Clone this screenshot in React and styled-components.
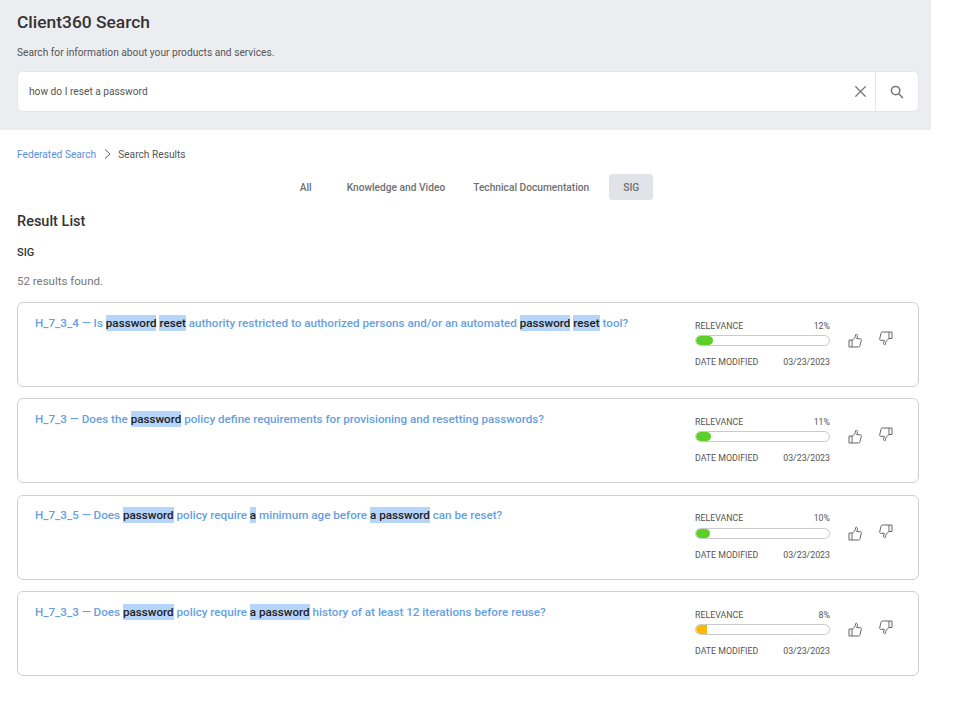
import React from 'react';
import styled, { createGlobalStyle } from 'styled-components';
import { X } from 'lucide-react';

const GlobalStyle = createGlobalStyle`
  body {
    margin: 0;
    background: #fff;
    font-family: Roboto, "Liberation Sans", sans-serif;
    color: #333;
  }
`;

const Page = styled.div`
  width: 931px;
  height: 720px;
  overflow: hidden;
`;

const Header = styled.header`
  height: 130px;
  box-sizing: border-box;
  background: #ecedf1;
  padding: 12px 12px 0 17px;
`;

const Title = styled.h1`
  margin: 0;
  font-size: 17.4px;
  line-height: 21px;
  font-weight: 500;
  color: #333;
`;

const Subtitle = styled.p`
  margin: 14px 0 0;
  font-size: 10.2px;
  line-height: 12px;
  color: #555;
`;

const SearchBox = styled.div`
  margin-top: 12px;
  height: 41px;
  box-sizing: border-box;
  display: flex;
  align-items: center;
  background: #fff;
  border: 1px solid #e6e7eb;
  border-radius: 6px;
`;

const Query = styled.div`
  flex: 1;
  padding-left: 11px;
  font-size: 10.2px;
  color: #555;
`;

const ClearButton = styled.div`
  width: 29px;
  height: 100%;
  display: flex;
  align-items: center;
  justify-content: center;
  color: #777;
`;

const SearchButton = styled(ClearButton)`
  width: 42px;
  border-left: 1px solid #e6e7eb;
`;

const Content = styled.main`
  padding: 0 12px 0 17px;
`;

const Breadcrumb = styled.nav`
  display: flex;
  align-items: center;
  height: 14px;
  margin-top: 17px;
  font-size: 10.2px;
  color: #555;
`;

const CrumbLink = styled.span`
  color: #5b8fdc;
`;

const CrumbArrow = styled.svg`
  margin: 0 7.5px;
`;

const Tabs = styled.div`
  display: flex;
  justify-content: center;
  height: 26px;
  margin: 13px 0 0;
  padding-left: 3px;
`;

const Tab = styled.div`
  display: flex;
  align-items: center;
  padding: 0 14px;
  margin-left: ${(p) => (p.$active ? '6px' : '0')};
  margin-right: ${(p) => (p.$first ? '7px' : '0')};
  font-size: 10.2px;
  font-weight: 500;
  color: #707070;
  border-radius: 3px;
  background: ${(p) => (p.$active ? '#e2e3e9' : 'transparent')};
`;

const ListTitle = styled.h2`
  margin: 12px 0 0;
  font-size: 14.5px;
  line-height: 20px;
  font-weight: 500;
  color: #333;
`;

const Category = styled.div`
  margin-top: 14px;
  font-size: 11px;
  line-height: 14px;
  font-weight: 500;
  color: #333;
`;

const Count = styled.div`
  margin-top: 14px;
  font-size: 11.5px;
  line-height: 14px;
  color: #777;
`;

const Results = styled.div`
  display: flex;
  flex-direction: column;
  gap: 11.4px;
  margin-top: 14px;
`;

const Card = styled.article`
  height: 85px;
  box-sizing: border-box;
  display: flex;
  justify-content: space-between;
  border: 1px solid #cfd0d3;
  border-radius: 6px;
  padding: 8.5px 25px 0 17px;
`;

const CardTitle = styled.a`
  font-size: 11.67px;
  line-height: 17px;
  font-weight: 500;
  color: #669fe2;
`;

const Mark = styled.mark`
  background: #b6d5fa;
  color: #1c1c1c;
  padding: 1px 0;
`;

const Side = styled.div`
  display: flex;
  align-items: flex-start;
  padding-top: 9px;
`;

const Stats = styled.div`
  width: 135px;
  display: flex;
  flex-direction: column;
`;

const StatRow = styled.div`
  display: flex;
  justify-content: space-between;
  font-size: 8.8px;
  line-height: 11px;
  color: #555;
`;

const Bar = styled.div`
  height: 11px;
  box-sizing: border-box;
  margin: 3.5px 0 11px;
  border: 1px solid #c9cacd;
  border-radius: 6px;
  overflow: hidden;
`;

const BarFill = styled.div`
  height: 100%;
  border-radius: ${(p) => (p.$flat ? '5px 0 0 5px' : '5px')};
  background: ${(p) => p.$color};
`;

const Votes = styled.div`
  display: flex;
  gap: 15px;
  margin: 12.5px 0 0 18px;
`;

const VoteIcon = styled.svg`
  display: block;
  margin-top: ${(p) => (p.$down ? '-2px' : '0')};
`;

const ThumbUp = () => (
  <VoteIcon width="15" height="15" viewBox="0 0 15 15" fill="none" stroke="#666" strokeWidth="1" strokeLinejoin="round">
    <path d="M1 7h3v7H1zM4 7.500l2.600-2.400c.7-.8.900-1.800.900-3.100 0-.9 1.700-.9 1.900.3.200 1.100-.2 2.400-.7 3.400h3.500c.9 0 1.300.7 1.100 1.500l-1.300 5.600c-.1.600-.6 1.200-1.300 1.200H4" />
  </VoteIcon>
);

const ThumbDown = () => (
  <VoteIcon $down width="15" height="15" viewBox="0 0 15 15" fill="none" stroke="#666" strokeWidth="1" strokeLinejoin="round">
    <path d="M11 1h3v6.500h-3zM11 7.500l-2.600 2.400c-.7.800-.9 1.800-.9 3.100 0 .9-1.700.9-1.900-.3-.2-1.100.2-2.400.7-3.400H2.800c-.9 0-1.300-.7-1.100-1.500L3 2.200C3.100 1.600 3.600 1 4.300 1H11" />
  </VoteIcon>
);

const SearchGlyph = () => (
  <svg width="14" height="14" viewBox="0 0 14 14" fill="none" stroke="#777" strokeWidth="1.5">
    <circle cx="5.6" cy="5.6" r="4.2" />
    <path d="M8.7 8.7L13 13" />
  </svg>
);

const results = [
  {
    id: 'H_7_3_4',
    parts: ['Is ', ['password'], ' ', ['reset'], ' authority restricted to authorized persons and/or an automated ', ['password'], ' ', ['reset'], ' tool?'],
    relevance: 12,
  },
  {
    id: 'H_7_3',
    parts: ['Does the ', ['password'], ' policy define requirements for provisioning and resetting passwords?'],
    relevance: 11,
  },
  {
    id: 'H_7_3_5',
    parts: ['Does ', ['password'], ' policy require ', ['a'], ' minimum age before ', ['a password'], ' can be reset?'],
    relevance: 10,
  },
  {
    id: 'H_7_3_3',
    parts: ['Does ', ['password'], ' policy require ', ['a password'], ' history of at least 12 iterations before reuse?'],
    relevance: 8,
  },
];

function ResultCard({ id, parts, relevance }) {
  const low = relevance < 10;
  return (
    <Card>
      <div>
        <CardTitle>
          {id} — {parts.map((part, i) => (Array.isArray(part) ? <Mark key={i}>{part[0]}</Mark> : part))}
        </CardTitle>
      </div>
      <Side>
        <Stats>
          <StatRow>
            <span>RELEVANCE</span>
            <span>{relevance}%</span>
          </StatRow>
          <Bar>
            <BarFill $flat={low} $color={low ? '#f9b80c' : '#5dd027'} style={{ width: `${relevance + 0.5}%` }} />
          </Bar>
          <StatRow>
            <span>DATE MODIFIED</span>
            <span>03/23/2023</span>
          </StatRow>
        </Stats>
        <Votes>
          <ThumbUp />
          <ThumbDown />
        </Votes>
      </Side>
    </Card>
  );
}

export default function App() {
  return (
    <Page>
      <GlobalStyle />
      <Header>
        <Title>Client360 Search</Title>
        <Subtitle>Search for information about your products and services.</Subtitle>
        <SearchBox>
          <Query>how do I reset a password</Query>
          <ClearButton>
            <X size={19} strokeWidth={1.6} />
          </ClearButton>
          <SearchButton>
            <SearchGlyph />
          </SearchButton>
        </SearchBox>
      </Header>
      <Content>
        <Breadcrumb>
          <CrumbLink>Federated Search</CrumbLink>
          <CrumbArrow width="7" height="10" viewBox="0 0 7 10" fill="none" stroke="#666" strokeWidth="1">
            <path d="M1 0.5 L6 5 L1 9.5" />
          </CrumbArrow>
          Search Results
        </Breadcrumb>
        <Tabs>
          <Tab $first>All</Tab>
          <Tab>Knowledge and Video</Tab>
          <Tab>Technical Documentation</Tab>
          <Tab $active>SIG</Tab>
        </Tabs>
        <ListTitle>Result List</ListTitle>
        <Category>SIG</Category>
        <Count>52 results found.</Count>
        <Results>
          {results.map((r) => (
            <ResultCard key={r.id} {...r} />
          ))}
        </Results>
      </Content>
    </Page>
  );
}
